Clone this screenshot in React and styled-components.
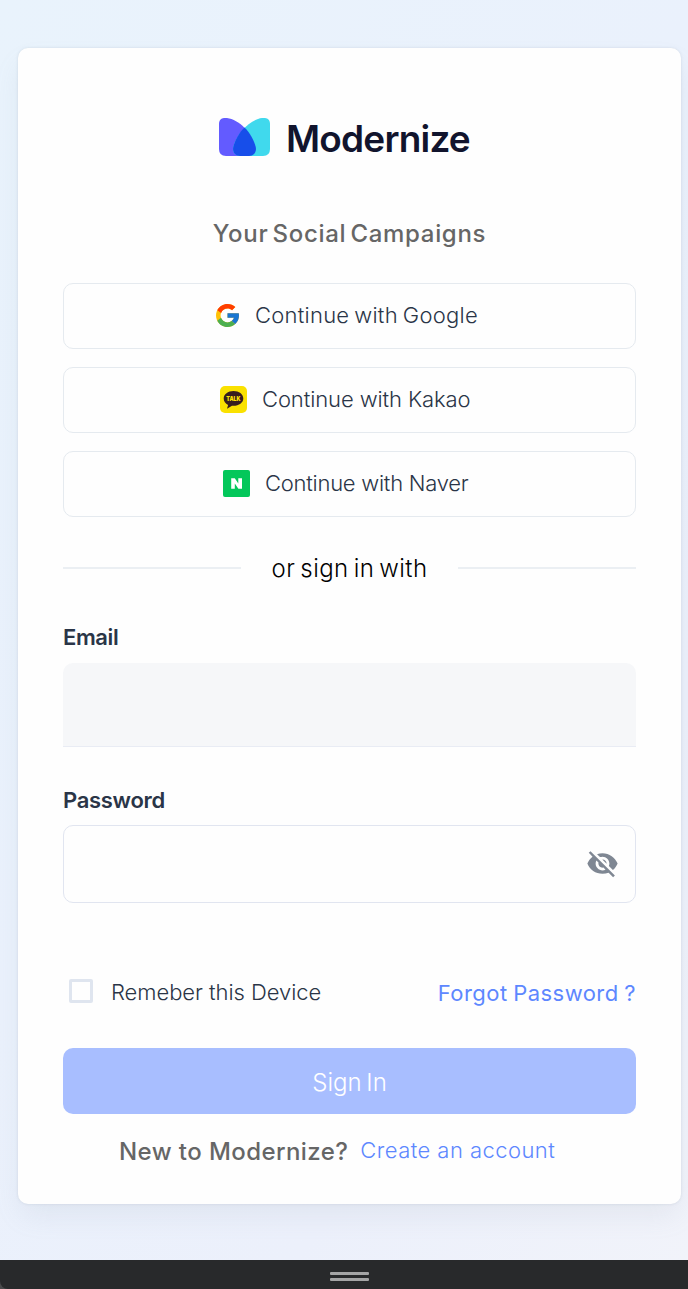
import React, { useState } from 'react';
import styled, { createGlobalStyle } from 'styled-components';

const GlobalStyle = createGlobalStyle`
  *, *::before, *::after { box-sizing: border-box; }
  body { margin: 0; background: #4a4a4c; overflow: hidden; }
  button, input { font: inherit; }
`;

const Page = styled.div`
  height: 1289px;
  display: flex;
  flex-direction: column;
  font-family: Inter, "Liberation Sans", sans-serif;
  color: #2a3547;
`;

const Backdrop = styled.main`
  height: 1260px;
  padding: 48px 7px 56px 18px;
  background: linear-gradient(125deg, #e9f3fc 0%, #eaf1fc 45%, #ecf0fb 75%, #f1f3fa 100%);
`;

const Card = styled.section`
  height: 1156px;
  padding: 70px 45px 38px;
  border-radius: 10px;
  background: #fefefe;
  box-shadow: rgba(145, 158, 171, 0.28) 0 0 3px, rgba(145, 158, 171, 0.14) 0 14px 28px -4px;
`;

const Text = styled.span`
  font-size: ${(p) => p.$size || 22}px;
  font-weight: ${(p) => p.$weight || 300};
  letter-spacing: ${(p) => p.$track || 0}px;
  word-spacing: ${(p) => p.$word || 0}px;
  color: ${(p) => p.$color || 'inherit'};
  white-space: pre;
  line-height: inherit;
`;

const Brand = styled.div`
  display: flex;
  align-items: center;
  height: 38px;
  padding-left: 156px;
  gap: 16px;
  line-height: 38px;
  svg { flex: none; }
  span { padding-top: 3px; }
`;

const Tagline = styled.h1`
  display: flex;
  justify-content: center;
  margin: 61px 0 0;
  height: 32px;
  line-height: 34px;
`;

const Providers = styled.div`
  display: grid;
  gap: 18px;
  margin-top: 34px;
`;

const ProviderButton = styled.button`
  display: flex;
  align-items: center;
  height: 66px;
  padding: 0 0 2px ${(p) => p.$inset}px;
  gap: ${(p) => p.$gap}px;
  border: 1px solid #e5eaef;
  border-radius: 10px;
  background: transparent;
  color: inherit;
  line-height: 30px;
  svg { flex: none; }
`;

const Divider = styled.div`
  display: flex;
  align-items: center;
  justify-content: space-between;
  height: 30px;
  margin-top: 36px;
  line-height: 30px;
  color: #000;
  span { padding-top: 2px; }
  &::before, &::after {
    content: "";
    width: 178px;
    height: 2px;
    background: #ebeff3;
  }
`;

const Label = styled.label`
  display: block;
  height: 28px;
  margin-top: ${(p) => p.$top}px;
  line-height: 28px;
`;

const EmailInput = styled.input`
  display: block;
  width: 100%;
  height: 84px;
  margin-top: 12px;
  padding: 0 20px;
  border: 0;
  border-bottom: 1px solid #e9ecf4;
  border-radius: 10px 10px 0 0;
  background: #f6f7f9;
  outline: none;
`;

const PasswordField = styled.div`
  display: flex;
  align-items: center;
  height: 78px;
  margin-top: 11px;
  padding: 0 16px 2px 20px;
  border: 1px solid #e1e5f0;
  border-radius: 10px;
  input { flex: 1; min-width: 0; border: 0; outline: none; background: transparent; }
`;

const IconButton = styled.button`
  display: flex;
  padding: 0;
  border: 0;
  background: none;
  color: #7f8793;
`;

const Options = styled.div`
  display: flex;
  justify-content: space-between;
  height: 32px;
  margin-top: 73px;
  line-height: 32px;
`;

const Remember = styled.label`
  display: flex;
  gap: 18px;
  padding-left: 6px;
`;

const Checkbox = styled.input`
  appearance: none;
  width: 24px;
  height: 24px;
  margin: 3px 0 0;
  border: 3px solid #dfe5ef;
  border-radius: 2px;
`;

const Link = styled.a`
  color: #5d87ff;
  text-decoration: none;
  padding-top: ${(p) => p.$drop || 0}px;
`;

const SignIn = styled.button`
  display: block;
  width: 100%;
  height: 66px;
  margin-top: 40px;
  padding: 2px 0 0;
  border: 0;
  border-radius: 10px;
  background: #a8beff;
  color: #fff;
`;

const Footer = styled.p`
  display: flex;
  height: 30px;
  margin: 22px 0 0;
  padding-left: 56px;
  gap: 12px;
  line-height: 32px;
  a { line-height: 28px; }
`;

const DragBar = styled.footer`
  display: flex;
  flex-direction: column;
  align-items: center;
  gap: 3px;
  height: 29px;
  padding: 12px 0 0 11px;
  border-bottom-left-radius: 8px;
  background: #28292b;
`;

const Grip = styled.i`
  width: 39px;
  height: 3px;
  border-radius: 1px;
  background: #a5a5a6;
`;

const Logo = () => (
  <svg width="51" height="38" viewBox="0 0 51 38">
    <path d="M7 38Q0 38 0 31V6C0 1 3.500 -.5 8 0C20 1.500 33 15 36.600 28.500C38 34 35 38 30 38Z" fill="#635bff" />
    <path d="M44 38Q51 38 51 31V6C51 1 47.500 -.5 43 0C31 1.500 18 15 14.400 28.500C13 34 16 38 21 38Z" fill="#40d9ed" />
    <path d="M25.500 9.500C31 14.800 35 22.500 36.600 28.500C38 34 35 38 30 38H21C16 38 13 34 14.400 28.500C16 22.500 20 14.800 25.500 9.500Z" fill="#174eea" />
  </svg>
);

const GoogleIcon = () => (
  <svg width="23" height="23" viewBox="4 4 40 40">
    <path fill="#ffc107" d="M43.600 20.100H42V20H24v8h11.300C33.700 32.700 29.200 36 24 36c-6.600 0-12-5.400-12-12s5.400-12 12-12c3 0 5.800 1.200 7.900 3l5.700-5.700C34 6 29.300 4 24 4 13 4 4 13 4 24s9 20 20 20 20-9 20-20c0-1.300-.1-2.700-.4-3.900z" />
    <path fill="#ff3d00" d="M6.300 14.700l6.600 4.800C14.700 15.100 19 12 24 12c3 0 5.800 1.200 7.900 3l5.700-5.700C34 6 29.300 4 24 4 16.300 4 9.700 8.300 6.300 14.700z" />
    <path fill="#4caf50" d="M24 44c5.200 0 9.900-2 13.400-5.200l-6.200-5.200C29.200 35.100 26.700 36 24 36c-5.200 0-9.600-3.300-11.300-7.900l-6.500 5C9.500 39.600 16.200 44 24 44z" />
    <path fill="#1976d2" d="M43.600 20.100H42V20H24v8h11.300c-.8 2.200-2.200 4.200-4.100 5.600l6.200 5.200C37 39.200 44 34 44 24c0-1.300-.1-2.700-.4-3.900z" />
  </svg>
);

const KakaoIcon = () => (
  <svg width="27" height="27" viewBox="0 0 27 27">
    <rect width="27" height="27" rx="5" fill="#fae100" />
    <path d="M13.500 5C8 5 3.700 8.300 3.700 12.500c0 2.800 1.700 5.100 4.400 6.400L7 22.800l5-3.100c6.300.6 11.300-2.700 11.300-7.200S19 5 13.500 5Z" fill="#371d1e" />
    <text x="6.300" y="15" fontFamily="Inter, sans-serif" fontSize="6.400" fontWeight="900" textLength="14.200" lengthAdjust="spacingAndGlyphs" fill="#ffe500">TALK</text>
  </svg>
);

const NaverIcon = () => (
  <svg width="27" height="27" viewBox="0 0 27 27">
    <rect width="27" height="27" rx="2" fill="#03c75a" />
    <path d="M8.200 8.200h3.600l3.500 5.200V8.200H19v10.600h-3.600l-3.600-5.200v5.200H8.200Z" fill="#fff" />
  </svg>
);

const HiddenEyeIcon = () => (
  <svg width="33" height="33" viewBox="0 0 24 24" fill="currentColor">
    <path d="M12 7c2.760 0 5 2.240 5 5 0 .65-.13 1.260-.36 1.830l2.920 2.920c1.510-1.260 2.700-2.890 3.430-4.750-1.730-4.390-6-7.500-11-7.500-1.400 0-2.740.25-3.980.7l2.160 2.160C10.740 7.130 11.350 7 12 7zM2 4.270l2.280 2.280.46.46C3.080 8.300 1.780 10.020 1 12c1.730 4.390 6 7.500 11 7.500 1.550 0 3.030-.3 4.380-.84l.42.42L19.730 22 21 20.730 3.270 3 2 4.270zM7.530 9.800l1.550 1.550c-.05.21-.08.43-.08.65 0 1.660 1.340 3 3 3 .22 0 .44-.03.65-.08l1.550 1.550c-.67.33-1.410.53-2.200.53-2.760 0-5-2.240-5-5 0-.79.2-1.530.53-2.200zm4.310-.78l3.150 3.150.02-.16c0-1.660-1.340-3-3-3l-.17.01z" />
  </svg>
);

const providers = [
  { name: 'Google', Icon: GoogleIcon, inset: 152, gap: 16, track: 0.25, word: -1.5 },
  { name: 'Kakao', Icon: KakaoIcon, inset: 156, gap: 15, track: -0.1, word: 0 },
  { name: 'Naver', Icon: NaverIcon, inset: 159, gap: 15, track: -0.25, word: 0 },
];

export default function App() {
  const [visible, setVisible] = useState(false);
  return (
    <Page>
      <GlobalStyle />
      <Backdrop>
        <Card>
          <Brand>
            <Logo />
            <Text $size={37} $weight={600} $track={-0.8} $color="#11142d">Modernize</Text>
          </Brand>
          <Tagline><Text $size={24} $weight={500} $track={0.7} $word={-3} $color="#666">Your Social Campaigns</Text></Tagline>
          <Providers>
            {providers.map(({ name, Icon, inset, gap, track, word }) => (
              <ProviderButton key={name} type="button" $inset={inset} $gap={gap}>
                <Icon />
                <Text $track={track} $word={word}>{`Continue with ${name}`}</Text>
              </ProviderButton>
            ))}
          </Providers>
          <Divider><Text $size={24} $track={0.4} $word={-2}>or sign in with</Text></Divider>
          <Label $top={40} htmlFor="email"><Text $weight={600} $track={-0.4}>Email</Text></Label>
          <EmailInput id="email" type="email" />
          <Label $top={39} htmlFor="password"><Text $weight={600} $track={-0.3}>Password</Text></Label>
          <PasswordField>
            <input id="password" type={visible ? 'text' : 'password'} />
            <IconButton type="button" aria-label="Toggle password visibility" onClick={() => setVisible(!visible)}>
              <HiddenEyeIcon />
            </IconButton>
          </PasswordField>
          <Options>
            <Remember>
              <Checkbox type="checkbox" />
              <Text $track={-0.05}>Remeber this Device</Text>
            </Remember>
            <Link href="#" $drop={1}><Text $weight={400} $track={0.45} $word={-1}>Forgot Password ?</Text></Link>
          </Options>
          <SignIn type="button"><Text $size={24} $word={-2}>Sign In</Text></SignIn>
          <Footer>
            <Text $size={24} $weight={500} $track={0.42} $color="#666">New to Modernize?</Text>
            <Link href="#"><Text $track={0.45}>Create an account</Text></Link>
          </Footer>
        </Card>
      </Backdrop>
      <DragBar><Grip /><Grip /></DragBar>
    </Page>
  );
}
